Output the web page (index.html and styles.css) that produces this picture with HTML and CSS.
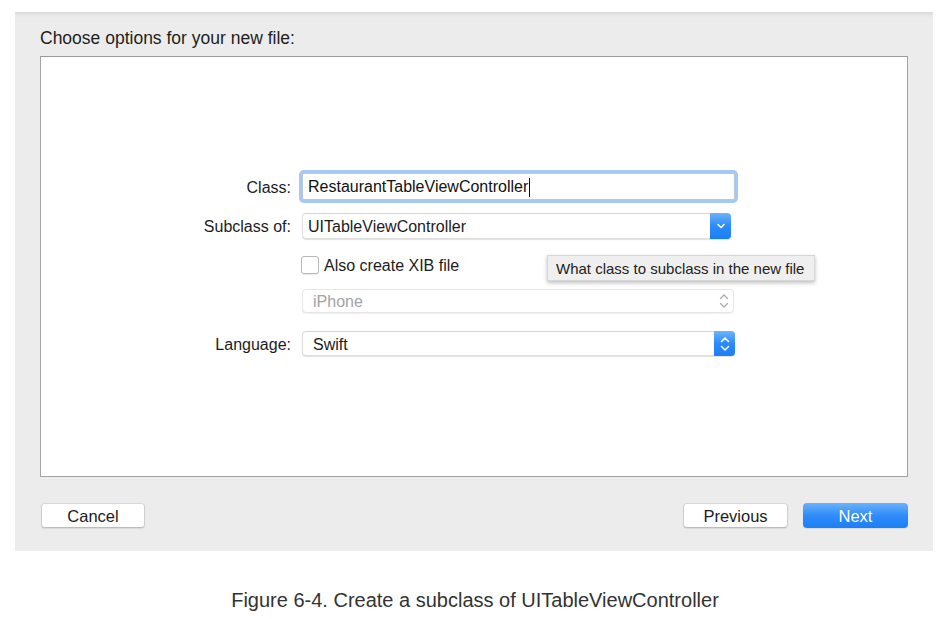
FILE: index.html
```html
<!DOCTYPE html>
<html>
<head>
<meta charset="utf-8">
<link rel="stylesheet" href="styles.css">
</head>
<body>
<div class="page">
  <div class="panel">
    <div class="title">Choose options for your new file:</div>
    <div class="box">
      <div class="form">
        <div class="row row-class">
          <div class="label">Class:</div>
          <div class="field"><span class="value">RestaurantTableViewController</span><span class="caret"></span></div>
        </div>
        <div class="row row-sub">
          <div class="label">Subclass of:</div>
          <div class="popup popup-sub">
            <span class="value">UITableViewController</span>
            <span class="blue-btn">
              <svg width="10" height="8" viewBox="0 0 10 8"><path d="M2 2.5 L5 5.5 L8 2.5" fill="none" stroke="#fff" stroke-width="1.6" stroke-linecap="round" stroke-linejoin="round"/></svg>
            </span>
          </div>
        </div>
        <div class="row row-check">
          <div class="label"></div>
          <label class="check"><span class="box-check"></span><span>Also create XIB file</span></label>
        </div>
        <div class="row row-iphone">
          <div class="label"></div>
          <div class="popup popup-disabled">
            <span class="value">iPhone</span>
            <span class="stepper">
              <svg width="12" height="18" viewBox="0 0 12 18"><path d="M2.5 6.5 L6 3 L9.5 6.5 M2.5 11.5 L6 15 L9.5 11.5" fill="none" stroke="#ababab" stroke-width="1.3" stroke-linecap="round" stroke-linejoin="round"/></svg>
            </span>
          </div>
        </div>
        <div class="row row-lang">
          <div class="label">Language:</div>
          <div class="popup popup-lang">
            <span class="value">Swift</span>
            <span class="blue-btn">
              <svg width="12" height="18" viewBox="0 0 12 18"><path d="M2.5 6.5 L6 3 L9.5 6.5 M2.5 11.5 L6 15 L9.5 11.5" fill="none" stroke="#fff" stroke-width="1.5" stroke-linecap="round" stroke-linejoin="round"/></svg>
            </span>
          </div>
        </div>
      </div>
      <div class="tooltip">What class to subclass in the new file</div>
    </div>
    <div class="actions">
      <button class="btn btn-cancel">Cancel</button>
      <div class="right-btns">
        <button class="btn">Previous</button>
        <button class="btn btn-primary">Next</button>
      </div>
    </div>
  </div>
  <div class="caption">Figure 6-4. Create a subclass of UITableViewController</div>
</div>
</body>
</html>
```
FILE: styles.css
```css
* { box-sizing: border-box; }
html, body { margin: 0; padding: 0; background: #ffffff; }
body { font-family: "Liberation Sans", Arial, sans-serif; color: #1c1c1c; }

.page { width: 950px; height: 619px; padding-top: 12px; padding-left: 15px; }

.panel {
  width: 918px;
  height: 539px;
  padding: 15px 25px 0 25px;
  background: linear-gradient(#d9d9d9 0, #e6e6e6 3px, #ececec 6px, #ececec 100%);
}

.title { font-size: 17.5px; line-height: 20px; height: 20px; color: #1e1e1e; padding-top: 1px; }

.box {
  position: relative;
  margin-top: 9px;
  width: 868px;
  height: 421px;
  background: #ffffff;
  border: 1px solid #a3a3a3;
  border-top-color: #9a9a9a;
}

.form { padding-top: 113px; display: flex; flex-direction: column; }

.row {
  display: grid;
  grid-template-columns: 250px 433px;
  column-gap: 11px;
  align-items: center;
}
.label { text-align: right; font-size: 16px; color: #1c1c1c; padding-top: 2px; }

.row-class { height: 33px; }
.row-sub { margin-top: 10px; height: 26px; }
.row-check { margin-top: 16px; height: 18px; }
.row-iphone { margin-top: 16px; height: 24px; }
.row-lang { margin-top: 18px; height: 25px; }

.field {
  height: 27px;
  width: 433px;
  border: 1px solid #b9c9dc;
  border-radius: 2px;
  background: #fff;
  box-shadow: 0 0 0 3px #a6c8f4;
  display: flex;
  align-items: center;
  padding-left: 5px;
  padding-top: 1px;
  font-size: 16px;
  color: #111;
}
.caret { display: inline-block; width: 1px; height: 19px; background: #111; margin-left: 1px; }

.popup {
  position: relative;
  display: flex;
  align-items: center;
  background: #fff;
  border: 1px solid #dedede;
  border-top-color: #d4d4d4;
  border-radius: 4px;
  box-shadow: 0 1px 1px rgba(0,0,0,0.12);
  font-size: 16px;
  padding-top: 2px;
}
.popup-sub { width: 429px; height: 26px; padding-left: 5px; }
.popup-disabled { width: 432px; height: 24px; padding-left: 10px; color: #a3a3a3; border-color: #e6e6e6; box-shadow: 0 1px 1px rgba(0,0,0,0.06); }
.popup-lang { width: 433px; height: 25px; padding-left: 10px; }

.blue-btn {
  position: absolute;
  right: -1px;
  top: -1px;
  bottom: -1px;
  width: 21px;
  border-radius: 0 4px 4px 0;
  background: linear-gradient(#6db3fb, #2b8bf8 50%, #1a7ff6);
  display: flex;
  align-items: center;
  justify-content: center;
}
.stepper {
  position: absolute;
  right: 3px;
  top: 0;
  bottom: 0;
  display: flex;
  align-items: center;
}

.check { display: flex; align-items: center; gap: 5px; font-size: 16px; margin-left: -1px; color: #1c1c1c; }
.check span:last-child { padding-top: 2px; }
.box-check {
  width: 18px; height: 18px;
  border: 1px solid #b8b8b8;
  border-radius: 3px;
  background: #fff;
  box-shadow: 0 1px 1px rgba(0,0,0,0.08);
}

.tooltip {
  position: absolute;
  left: 506px;
  top: 198px;
  width: 268px;
  height: 26px;
  background: #efefef;
  border: 1px solid #d6d6d6;
  box-shadow: 0 2px 4px rgba(0,0,0,0.25);
  font-size: 15px;
  color: #222;
  display: flex;
  align-items: center;
  padding-left: 8px;
  padding-top: 1px;
}

.actions {
  margin-top: 26px;
  width: 868px;
  display: flex;
  justify-content: space-between;
}
.right-btns { display: flex; gap: 15px; }

.btn {
  width: 105px;
  height: 25px;
  font-family: "Liberation Sans", Arial, sans-serif;
  font-size: 16.5px;
  color: #1c1c1c;
  background: #fff;
  border: 1px solid #cfcfcf;
  border-top-color: #d8d8d8;
  border-bottom-color: #bcbcbc;
  border-radius: 4px;
  box-shadow: 0 1px 1px rgba(0,0,0,0.08);
  padding: 1px 0 0 0;
  line-height: 23px;
}
.btn-cancel { width: 104px; margin-left: 1px; }
.btn-primary {
  color: #fff;
  border: none;
  background: linear-gradient(#6ab2fb, #2f8cf9 50%, #1b7ff7);
  line-height: 25px;
}

.caption {
  margin-top: 37px;
  margin-left: -15px;
  width: 950px;
  text-align: center;
  font-size: 20px;
  line-height: 24px;
  color: #333;
}
```
